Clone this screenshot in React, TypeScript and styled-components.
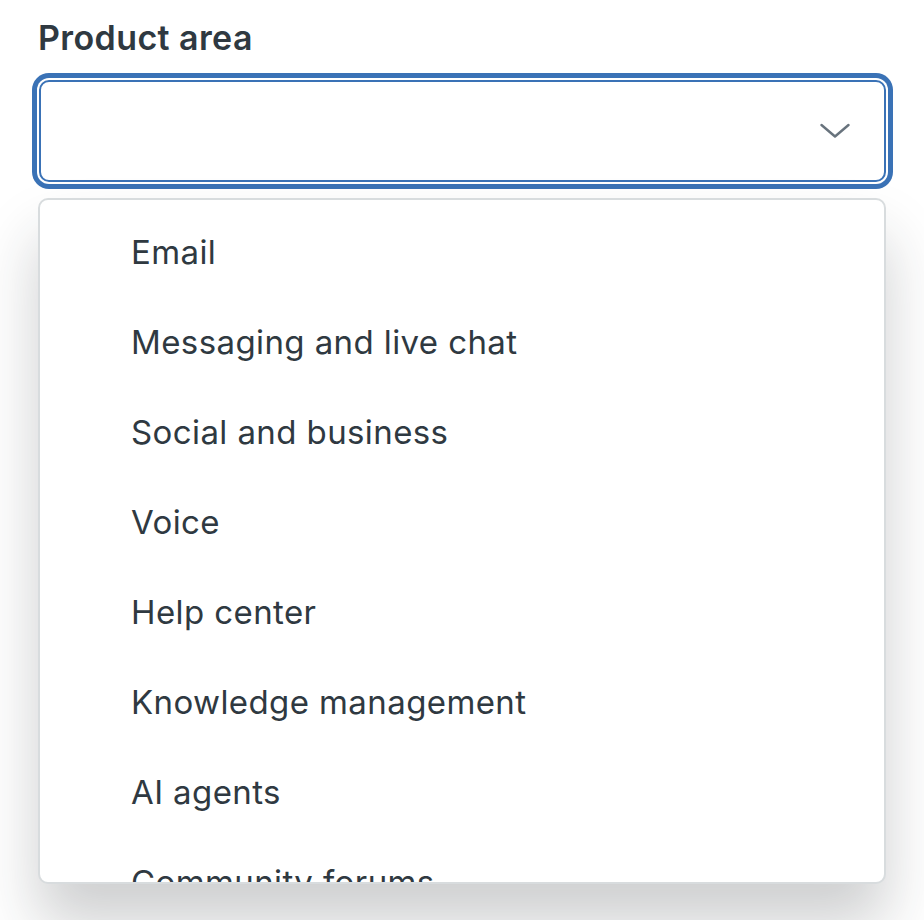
import React from 'react';
import styled, { createGlobalStyle } from 'styled-components';

const GlobalStyle = createGlobalStyle`
    html, body {
        margin: 0;
        padding: 0;
        background: #fff;
    }
    body {
        min-height: 920px;
        font-family: Inter, "Noto Sans", "Liberation Sans", sans-serif;
        color: #2f3941;
        -webkit-font-smoothing: antialiased;
    }
`;

const Field = styled.div`
    width: 848px;
    padding: 14px 0 0 38px;
    display: flex;
    flex-direction: column;
`;

const Label = styled.label`
    font-size: 34px;
    line-height: 48px;
    font-weight: 600;
    letter-spacing: 0.4px;
    color: #2f3941;
`;

const Trigger = styled.button`
    box-sizing: border-box;
    height: 102px;
    margin: 18px 0 0 1px;
    width: 847px;
    display: flex;
    align-items: center;
    justify-content: flex-end;
    padding: 0 34px 0 0;
    background: #fff;
    border: 2px solid #3a72b6;
    border-radius: 10px;
    box-shadow: 0 0 0 2px #fff, 0 0 0 7px #3a72b6; // focus ring
    cursor: pointer;
`;

const Menu = styled.ul`
    box-sizing: border-box;
    list-style: none;
    margin: 16px 0 0;
    padding: 7px 0;
    height: 686px;
    overflow: hidden;
    background: #fff;
    border: 2px solid #d8dcde;
    border-radius: 10px;
    box-shadow: 0 40px 60px rgba(30, 36, 42, 0.22);
`;

const Item = styled.li`
    height: 90px;
    display: flex;
    align-items: center;
    padding-left: 91px;
    font-size: 33px;
    letter-spacing: 0.4px;
    font-weight: 400;
    color: #2f3941;
    cursor: pointer;
    white-space: nowrap;
`;

const Chevron = () => (
    <svg width="30" height="16" viewBox="0 0 30 16" fill="none">
        <path d="M1.5 2 L15 13.5 L28.5 2" stroke="#68737d" strokeWidth="2.4" strokeLinecap="round" strokeLinejoin="round" />
    </svg>
);

const options = [
    'Email',
    'Messaging and live chat',
    'Social and business',
    'Voice',
    'Help center',
    'Knowledge management',
    'AI agents',
    'Community forums',
];

export default function App() {
    return (
        <>
            <GlobalStyle />
            <Field>
                <Label>Product area</Label>
                <Trigger aria-expanded="true">
                    <Chevron />
                </Trigger>
                <Menu role="listbox">
                    {options.map((o) => (
                        <Item key={o} role="option">{o}</Item>
                    ))}
                </Menu>
            </Field>
        </>
    );
}
